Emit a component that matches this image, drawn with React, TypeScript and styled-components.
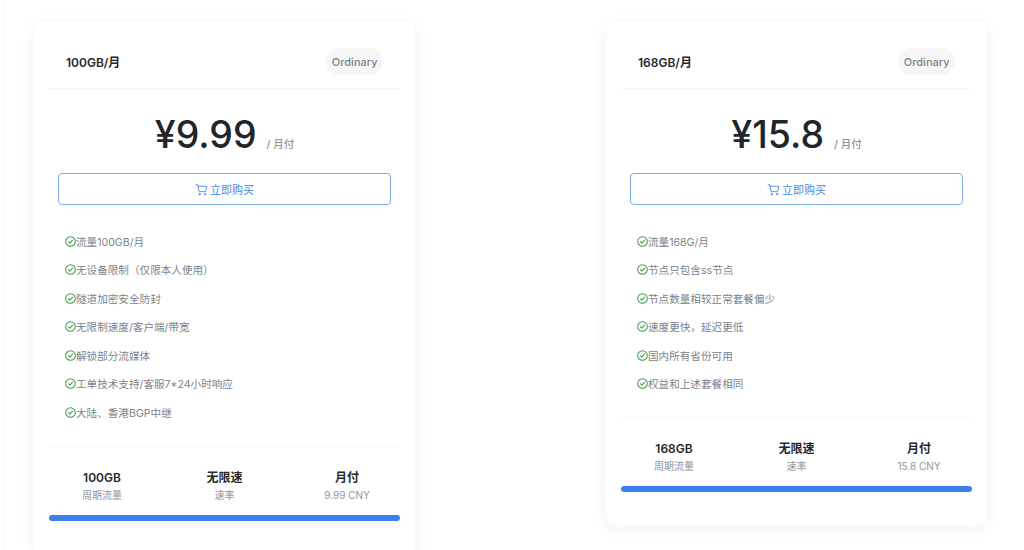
import React from "react";
import styled, { createGlobalStyle } from "styled-components";

const Global = createGlobalStyle`
  html, body { margin: 0; padding: 0; background: #fff; height: 550px; overflow: hidden; }
  body { font-family: Inter, "Noto Sans CJK SC", sans-serif; color: #212529; }
`;

const Page = styled.div`
  height: 550px;
  overflow: hidden;
  margin-left: 4px;
  padding: 20px 0 0 28px;
  border-left: 1px solid #f8f8f9;
  box-sizing: border-box;
  display: grid;
  grid-template-columns: 383px 383px;
  column-gap: 189px;
  align-items: start;
`;

const Card = styled.section`
  background: #fff;
  border-radius: 10px;
  border: 1px solid #f8f9fa;
  box-shadow: 0 4px 16px rgba(30, 40, 60, 0.05);
  padding: 0 15px 33px;
  box-sizing: border-box;
`;

const Header = styled.header`
  display: flex;
  align-items: center;
  justify-content: space-between;
  height: 68px;
  padding: 14px 17px 0 17px;
  box-sizing: border-box;
  border-bottom: 1px solid #f5f6f7;
`;

const Title = styled.h3`
  margin: 0;
  font-size: 12px;
  font-weight: 600;
  color: #25282c;
`;

const Badge = styled.span`
  display: flex;
  align-items: center;
  height: 27px;
  padding: 0 5.5px;
  border-radius: 14px;
  background: #f6f6f7;
  color: #7d8287;
  font-size: 11px;
  font-weight: 500;
`;

const PriceRow = styled.div`
  display: flex;
  justify-content: center;
  align-items: baseline;
  height: 84px;
  padding-top: 20px;
  box-sizing: border-box;
`;

const Price = styled.span`
  font-size: 37.5px;
  line-height: 52px;
  font-weight: 500;
  color: #212529;
`;

const Period = styled.span`
  margin-left: 10px;
  font-size: 10.5px;
  font-weight: 500;
  color: #8d9298;
`;

const BuyButton = styled.button`
  display: flex;
  width: 333px;
  height: 32px;
  margin-left: 9px;
  align-items: center;
  justify-content: center;
  gap: 2px;
  background: #fff;
  border: 1px solid #7aaee8;
  border-radius: 4px;
  color: #4a8be0;
  font: inherit;
  font-size: 11px;
`;

const Features = styled.ul`
  list-style: none;
  margin: 22px 0 0;
  padding: 0 0 0 16px;
`;

const Feature = styled.li`
  display: flex;
  align-items: center;
  height: 28.5px;
  font-size: 10.6px;
  color: #7c838a;
`;

const Stats = styled.div`
  display: grid;
  grid-template-columns: repeat(3, 122.5px);
  justify-content: center;
  margin-top: 19px;
  padding-top: 23px;
  border-top: 1px solid #f5f6f7;
  text-align: center;
`;

const StatCell = styled.div`
  display: flex;
  flex-direction: column;
  align-items: center;
`;

const StatValue = styled.strong`
  font-size: 12px;
  line-height: 16px;
  font-weight: 600;
  color: #25282c;
`;

const StatLabel = styled.span`
  margin-top: 2px;
  font-size: 10px;
  line-height: 14px;
  color: #8f969c;
`;

const Bar = styled.div`
  height: 6px;
  margin-top: 13px;
  border-radius: 3px;
  background: #3b7ff0;
`;

const CheckIcon = () => (
  <svg width="11" height="11" viewBox="0 0 24 24" fill="none" stroke="#3f9a4a" strokeWidth="2.2" strokeLinecap="round" strokeLinejoin="round">
    <circle cx="12" cy="12" r="10.5" />
    <path d="M7.5 12.5l3 3 6-6.5" />
  </svg>
);

const CartIcon = () => (
  <svg width="13" height="13" viewBox="0 0 24 24" fill="none" stroke="#4a8be0" strokeWidth="1.7" strokeLinecap="round" strokeLinejoin="round">
    <path d="M2 3h3l2.5 13h12L22 6H5.6" />
    <circle cx="8.5" cy="20.5" r="1.4" />
    <circle cx="18.5" cy="20.5" r="1.4" />
  </svg>
);

type Plan = {
  title: string;
  price: string;
  traffic: string;
  cny: string;
  features: string[];
};

const plans: Plan[] = [
  {
    title: "100GB/月",
    price: "¥9.99",
    traffic: "100GB",
    cny: "9.99 CNY",
    features: [
      "流量100GB/月",
      "无设备限制（仅限本人使用）",
      "隧道加密安全防封",
      "无限制速度/客户端/带宽",
      "解锁部分流媒体",
      "工单技术支持/客服7*24小时响应",
      "大陆、香港BGP中继",
    ],
  },
  {
    title: "168GB/月",
    price: "¥15.8",
    traffic: "168GB",
    cny: "15.8 CNY",
    features: [
      "流量168G/月",
      "节点只包含ss节点",
      "节点数量相较正常套餐偏少",
      "速度更快，延迟更低",
      "国内所有省份可用",
      "权益和上述套餐相同",
    ],
  },
];

export default function App() {
  return (
    <>
      <Global />
      <Page>
        {plans.map((p) => (
          <Card key={p.title}>
            <Header>
              <Title>{p.title}</Title>
              <Badge>Ordinary</Badge>
            </Header>
            <PriceRow>
              <Price>{p.price}</Price>
              <Period>/ 月付</Period>
            </PriceRow>
            <BuyButton>
              <CartIcon />
              立即购买
            </BuyButton>
            <Features>
              {p.features.map((f) => (
                <Feature key={f}>
                  <CheckIcon />
                  {f}
                </Feature>
              ))}
            </Features>
            <Stats>
              <StatCell>
                <StatValue>{p.traffic}</StatValue>
                <StatLabel>周期流量</StatLabel>
              </StatCell>
              <StatCell>
                <StatValue>无限速</StatValue>
                <StatLabel>速率</StatLabel>
              </StatCell>
              <StatCell>
                <StatValue>月付</StatValue>
                <StatLabel>{p.cny}</StatLabel>
              </StatCell>
            </Stats>
            <Bar />
          </Card>
        ))}
      </Page>
    </>
  );
}
